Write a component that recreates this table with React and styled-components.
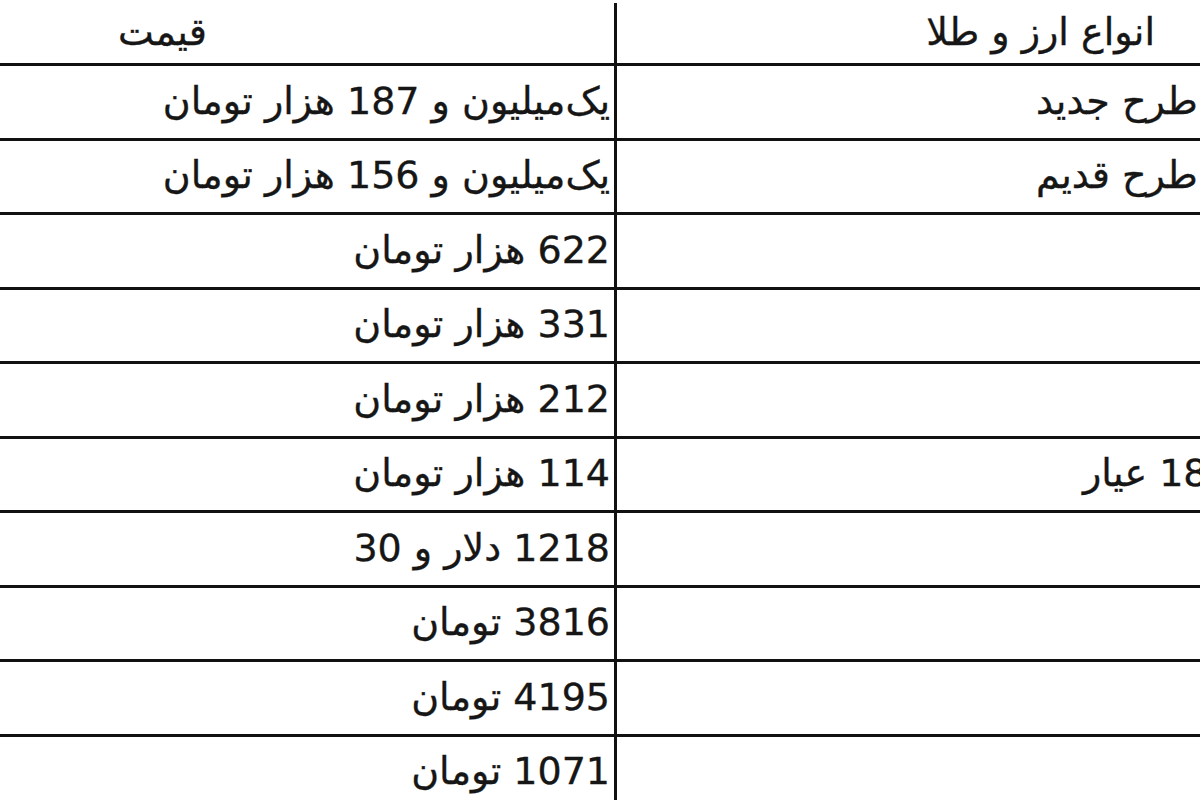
import React from 'react';
import styled, { createGlobalStyle } from 'styled-components';

const GlobalStyle = createGlobalStyle`
  html, body {
    margin: 0;
    padding: 0;
    background: #fff;
  }
  body {
    font-family: "DejaVu Sans", Tahoma, sans-serif;
  }
`;

const rows = [
  ['سکه تمام بهار آزادی طرح جدید', 'یک\u200cمیلیون و 187 هزار تومان'],
  ['سکه تمام بهار آزادی طرح قدیم', 'یک\u200cمیلیون و 156 هزار تومان'],
  ['نیم سکه', '622 هزار تومان'],
  ['ربع سکه', '331 هزار تومان'],
  ['سکه گرمی', '212 هزار تومان'],
  ['قیمت هر گرم طلای 18 عیار', '114 هزار تومان'],
  ['اونس طلا', '1218 دلار و 30'],
  ['دلار', '3816 تومان'],
  ['یورو', '4195 تومان'],
  ['درهم', '1071 تومان'],
];

const Frame = styled.div`
  width: 1200px;
  height: 800px;
  overflow: hidden;
  background: #fff;
`;

const Table = styled.div`
  direction: rtl;
  display: grid;
  grid-template-columns: 922px 614px;
  grid-template-rows: 63px;
  grid-auto-rows: 74.5px;
  width: 1536px;
  margin-top: 3px;
  color: #161616;
  font-size: 38px;
  -webkit-text-stroke: 0.35px #161616;
`;

const Cell = styled.div`
  display: flex;
  align-items: center;
  padding: 0 ${({ $pad }) => $pad || 5}px 2px 0;
  border-bottom: 3px solid #111;
  border-left: ${({ $divider }) => ($divider ? '3px solid #111' : 'none')};
  box-sizing: border-box;
  white-space: nowrap;
`;

export default function App() {
  return (
    <Frame>
      <GlobalStyle />
      <Table>
        <Cell $divider $pad={381}>انواع ارز و طلا</Cell>
        <Cell $pad={407}>قیمت</Cell>
        {rows.map(([name, price]) => (
          <React.Fragment key={name}>
            <Cell $divider>{name}</Cell>
            <Cell $pad={4}>{price}</Cell>
          </React.Fragment>
        ))}
      </Table>
    </Frame>
  );
}
